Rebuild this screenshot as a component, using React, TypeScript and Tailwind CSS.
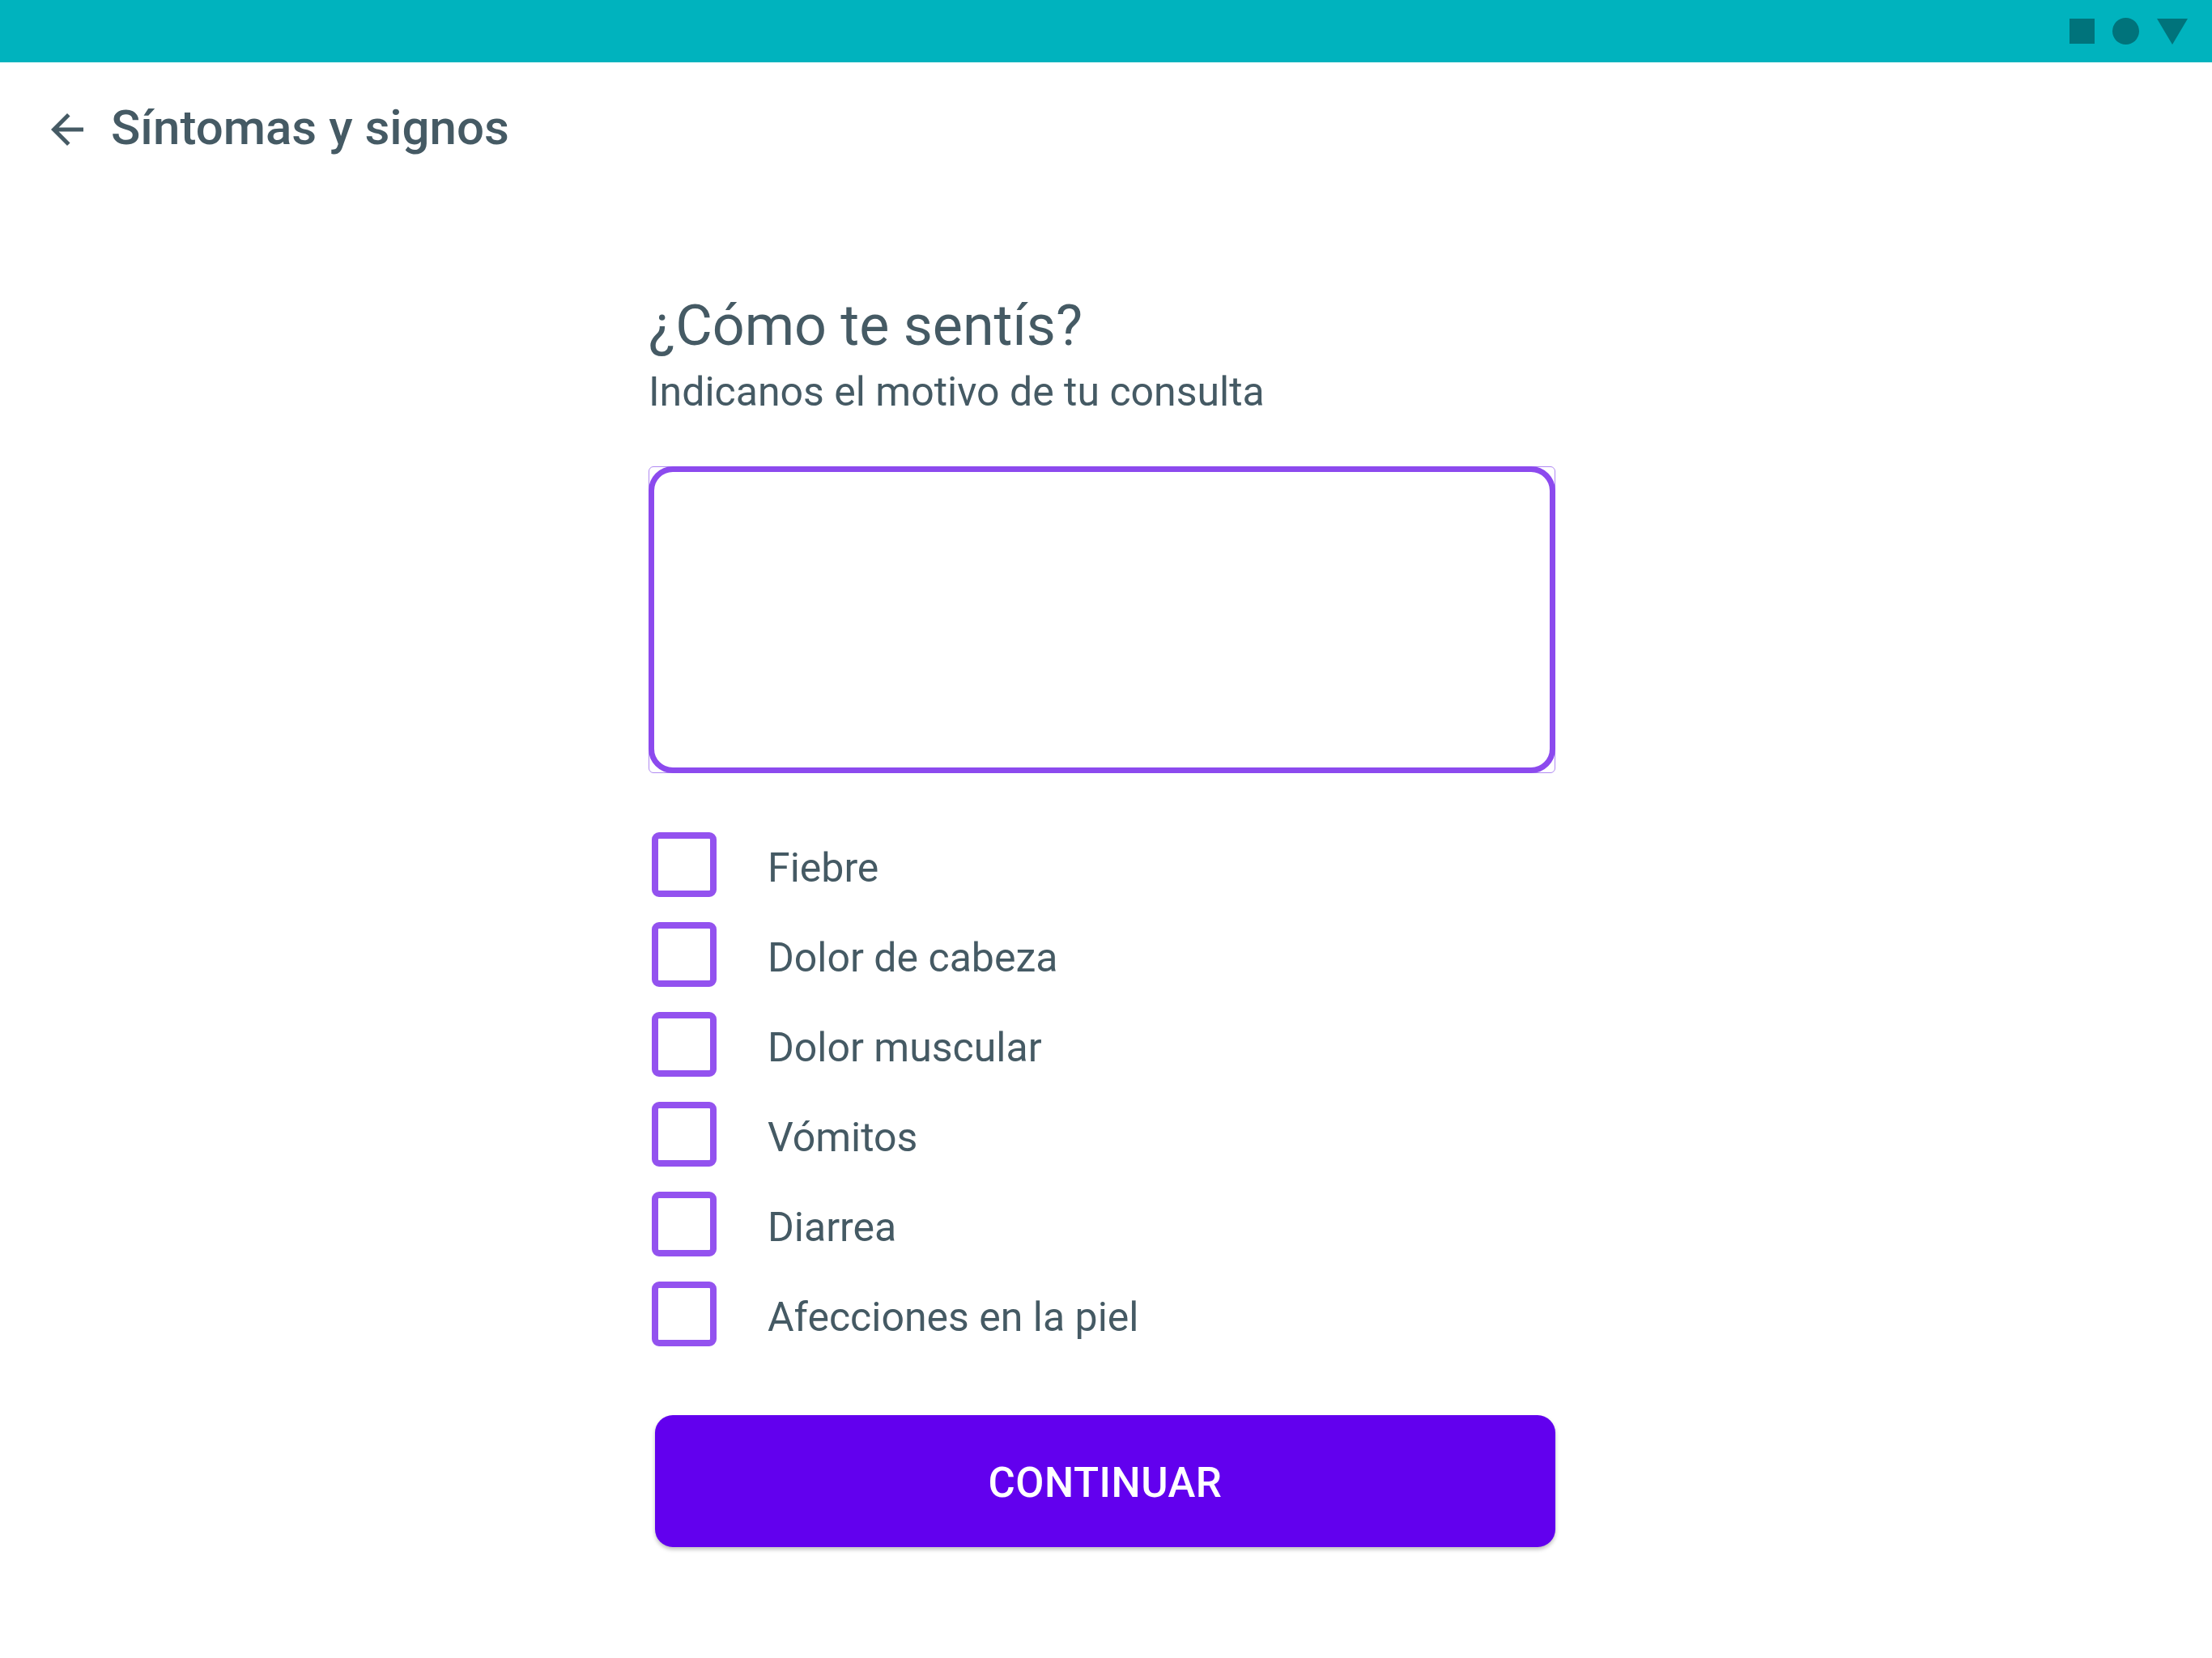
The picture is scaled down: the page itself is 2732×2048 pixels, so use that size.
import { useState } from 'react'

const symptoms = ['Fiebre', 'Dolor de cabeza', 'Dolor muscular', 'Vómitos', 'Diarrea', 'Afecciones en la piel']

function StatusBar() {
    return (
        <div className="h-[77px] bg-[#00b3be] flex items-center justify-end pr-[30px] gap-[22px]">
            <div className="w-[31px] h-[31px] bg-[#00737b]" />
            <div className="w-[33px] h-[33px] rounded-full bg-[#00737b]" />
            <svg width="38" height="32" viewBox="0 0 38 32">
                <polygon points="0,0 38,0 19,32" fill="#00737b" />
            </svg>
        </div>
    )
}

export default function App() {
    const [checked, setChecked] = useState<Record<string, boolean>>({})

    return (
        <div className="min-h-screen bg-white text-[#455a64] font-['Roboto','Liberation_Sans',sans-serif]">
            <StatusBar />

            {/* Toolbar */}
            <div className="h-[166px] flex items-center pl-[53px] gap-[24px]">
                <svg width="60" height="60" viewBox="0 0 24 24" className="shrink-0">
                    <path d="M20 11H7.83l5.59-5.59L12 4l-8 8 8 8 1.41-1.41L7.83 13H20v-2z" fill="#455a64" />
                </svg>
                <span className="text-[60px] font-medium leading-none pb-[4px]">Síntomas y signos</span>
            </div>

            {/* Form */}
            <div className="w-[1120px] ml-[801px] pt-[118px]">
                <h1 className="text-[70px] leading-[82px] font-normal">¿Cómo te sentís?</h1>
                <p className="mt-[11px] text-[50px] leading-[60px]">Indicanos el motivo de tu consulta</p>

                <div className="mt-[62px] h-[379px] border border-[#b08af2] rounded-[6px]">
                    <div className="-m-px h-[379px] border-[7px] border-[#8c4aee] rounded-[30px]" />
                </div>

                <ul className="mt-[57px]">
                    {symptoms.map((s) => (
                        <li key={s} className="h-[111px] flex items-center pl-[4px]">
                            <button
                                className="w-[80px] h-[80px] border-[8px] border-[#9352ef] rounded-[9px] bg-white flex items-center justify-center"
                                onClick={() => setChecked({ ...checked, [s]: !checked[s] })}
                            >
                                {checked[s] && <span className="w-[40px] h-[40px] bg-[#9352ef]" />}
                            </button>
                            <span className="ml-[63px] text-[50px] leading-none pt-[8px]">{s}</span>
                        </li>
                    ))}
                </ul>

                <button className="mt-[70px] ml-[8px] w-[1112px] h-[163px] pt-[6px] rounded-[22px] bg-[#6200ee] text-white text-[51px] font-medium tracking-[0.01em] shadow-[0_3px_5px_rgba(0,0,0,0.25)]">
                    CONTINUAR
                </button>
            </div>
        </div>
    )
}
